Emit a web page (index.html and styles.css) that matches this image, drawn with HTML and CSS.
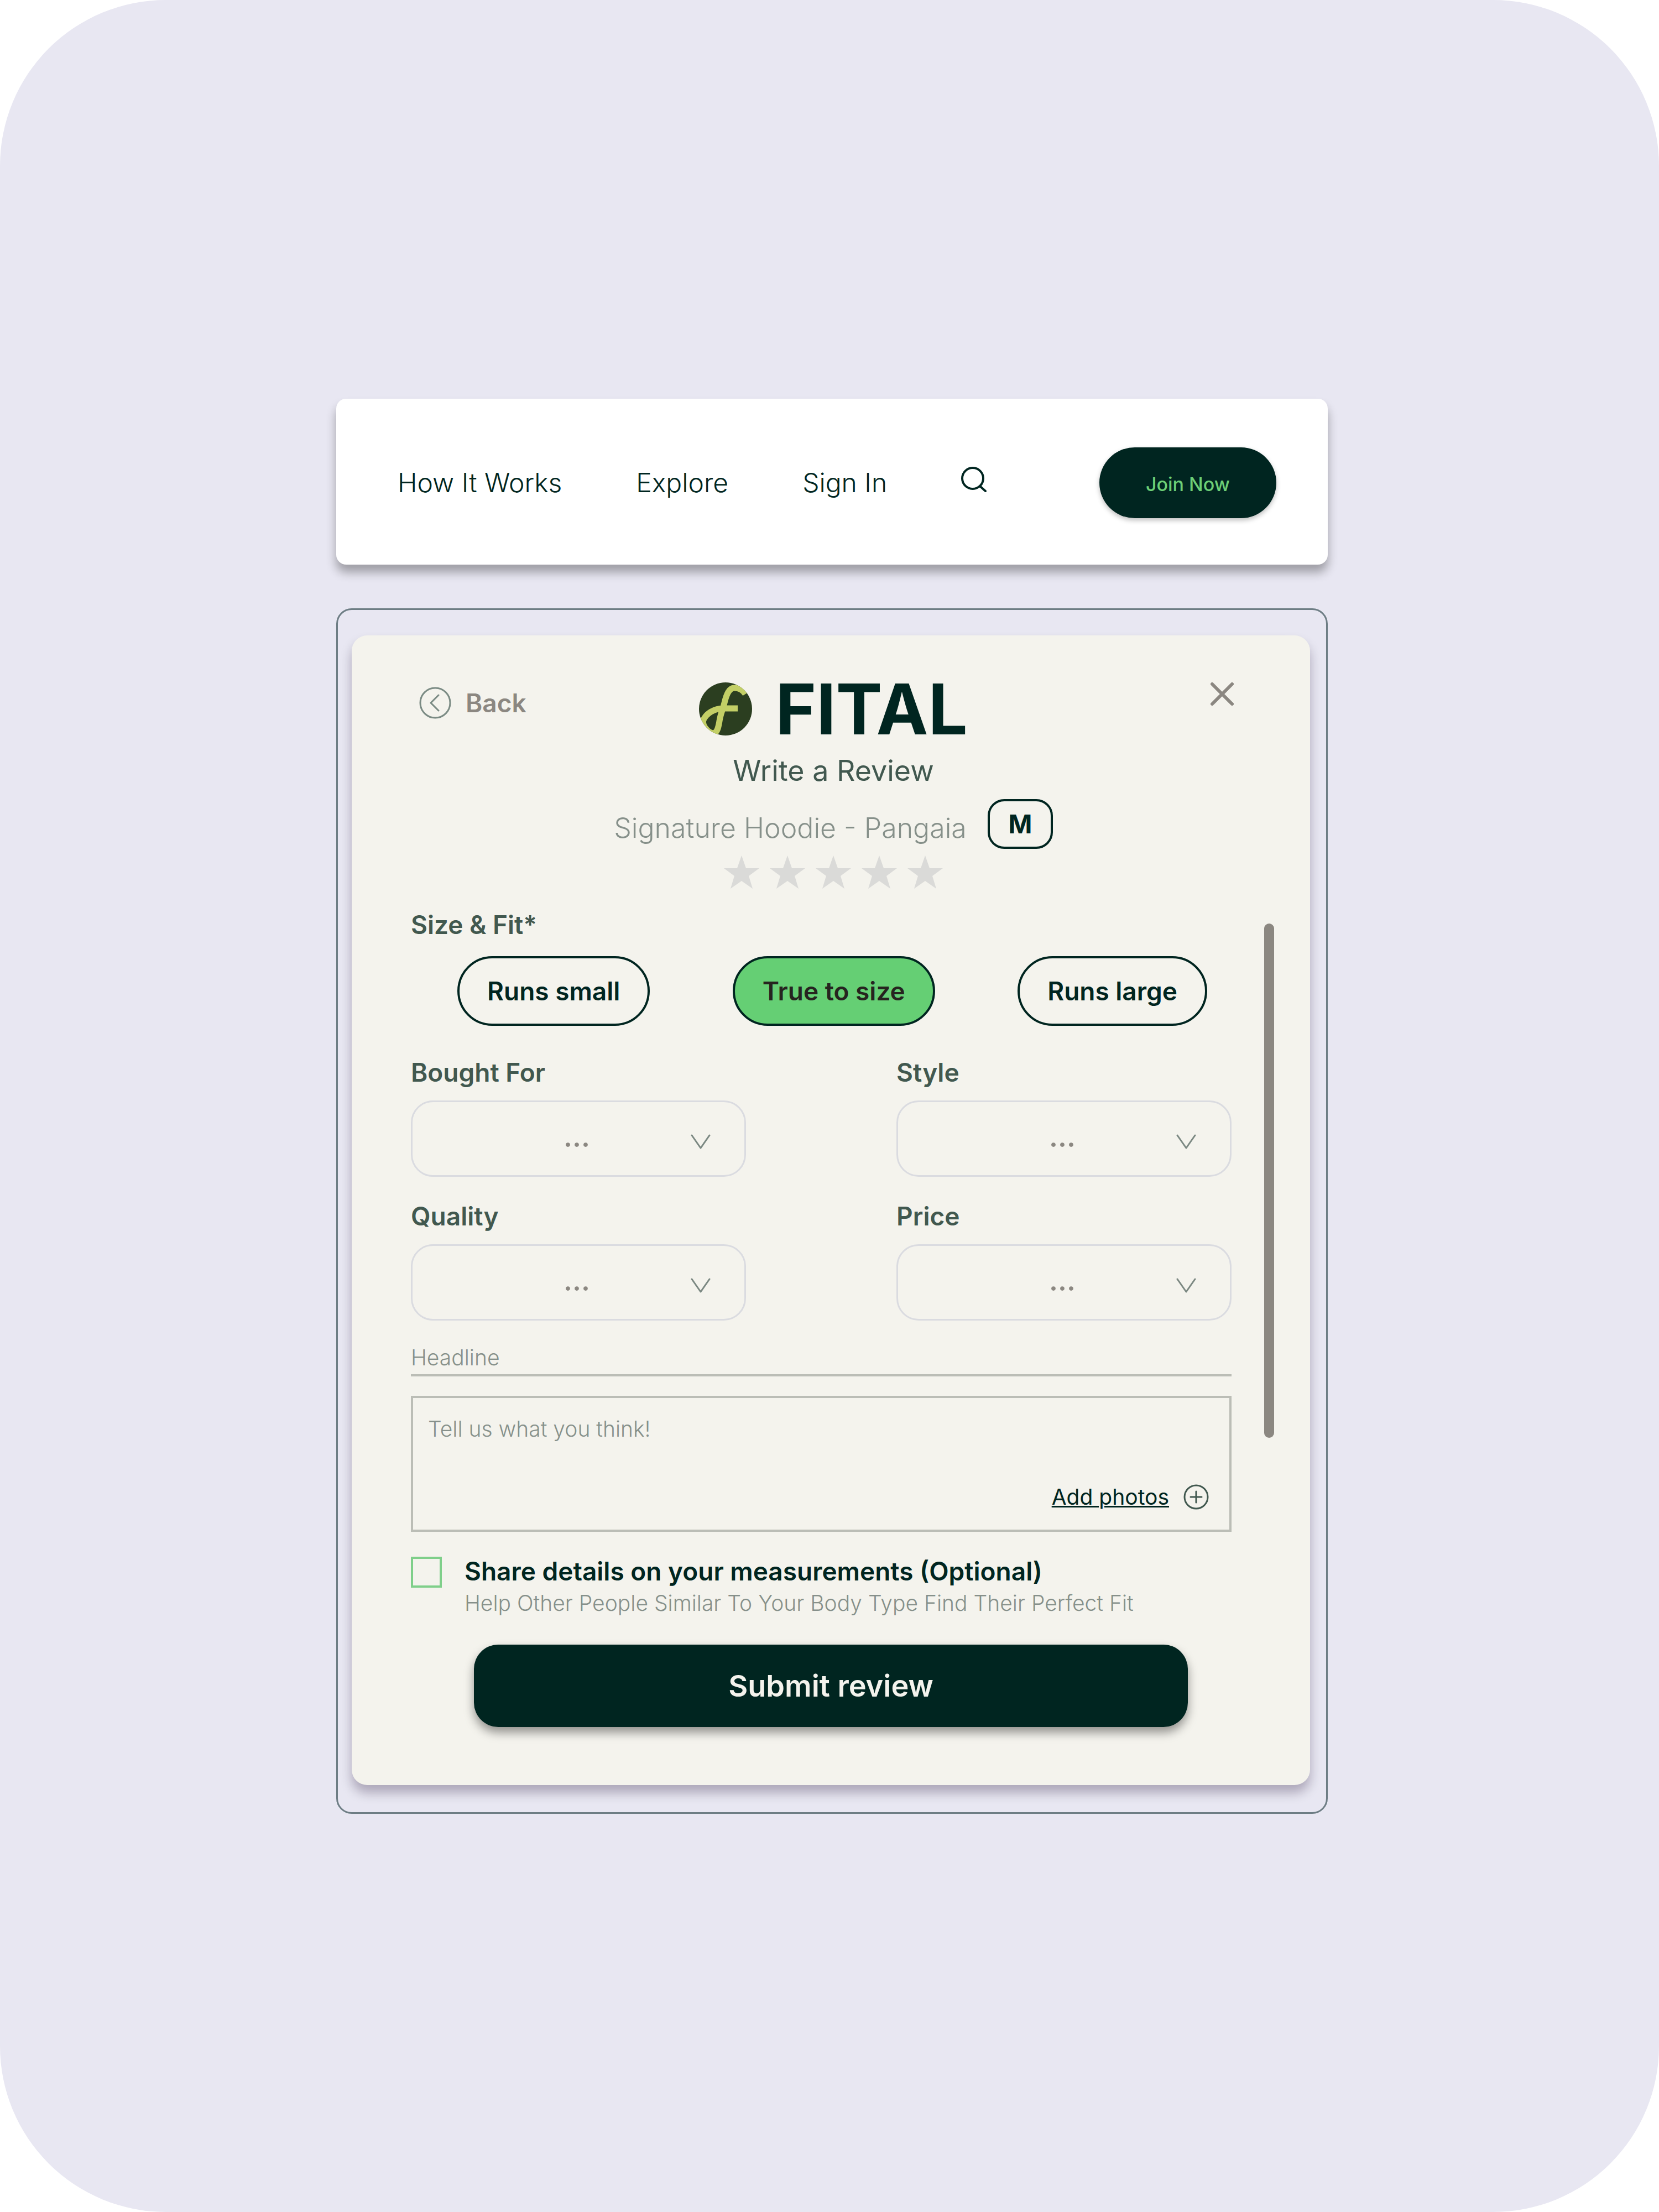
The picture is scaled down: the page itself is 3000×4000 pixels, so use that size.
FILE: index.html
```html
<!DOCTYPE html>
<html lang="en">
<head>
<meta charset="utf-8">
<meta name="viewport" content="width=device-width, initial-scale=1">
<title>Fital – Write a Review</title>
<link rel="stylesheet" href="styles.css">
</head>
<body>
<div class="page">
  <header class="nav">
    <nav class="nav-links" aria-label="Main">
      <a href="#how">How It Works</a>
      <a href="#explore">Explore</a>
      <a href="#signin">Sign In</a>
      <button class="icon-button search" type="button" aria-label="Search">
        <svg width="46" height="46" viewBox="0 0 46 46" fill="none" stroke="currentColor" stroke-width="4" stroke-linecap="round"><circle cx="21" cy="21" r="19"/><path d="M34 35l10 9"/></svg>
      </button>
    </nav>
    <button class="join" type="button">Join Now</button>
  </header>

  <main class="frame">
    <form class="card">
      <div class="card-head">
        <button class="back" type="button">
          <svg width="58" height="58" viewBox="0 0 58 58" fill="none" stroke="#7b8b84" stroke-width="3" stroke-linecap="round" stroke-linejoin="round"><circle cx="29" cy="29" r="27"/><path d="M35 15L21 29l14 14"/></svg>
          <span>Back</span>
        </button>

        <div class="intro">
          <div class="brand">
            <svg width="96" height="96" viewBox="0 0 96 96" fill="none">
              <defs><clipPath id="disc"><circle cx="48" cy="48" r="48"/></clipPath></defs>
              <circle cx="48" cy="48" r="48" fill="#2b3e20"/>
              <path clip-path="url(#disc)" d="M84 21C79 13 72 10 64 10C55 10 50 20 46 37C43 50 39 56 37 70C35 82 33 91 26 92C17 92 5 78 8 68C13 56 28 47 44 47H70" stroke="#c3cf66" stroke-width="11"/>
            </svg>
            <span class="brand-name">FITAL</span>
          </div>
          <h1 class="title">Write a Review</h1>
          <div class="product">
            <span class="product-name">Signature Hoodie - Pangaia</span>
            <span class="size-badge">M</span>
          </div>
          <div class="stars">
            <button class="icon-button" type="button" aria-label="1 star"><svg width="64" height="60" viewBox="0 0 64 60"><path d="M32 0l8 23h24L45 37l7 23-20-14-20 14 7-23L0 23h24z" fill="#dadad8"/></svg></button>
            <button class="icon-button" type="button" aria-label="2 stars"><svg width="64" height="60" viewBox="0 0 64 60"><path d="M32 0l8 23h24L45 37l7 23-20-14-20 14 7-23L0 23h24z" fill="#dadad8"/></svg></button>
            <button class="icon-button" type="button" aria-label="3 stars"><svg width="64" height="60" viewBox="0 0 64 60"><path d="M32 0l8 23h24L45 37l7 23-20-14-20 14 7-23L0 23h24z" fill="#dadad8"/></svg></button>
            <button class="icon-button" type="button" aria-label="4 stars"><svg width="64" height="60" viewBox="0 0 64 60"><path d="M32 0l8 23h24L45 37l7 23-20-14-20 14 7-23L0 23h24z" fill="#dadad8"/></svg></button>
            <button class="icon-button" type="button" aria-label="5 stars"><svg width="64" height="60" viewBox="0 0 64 60"><path d="M32 0l8 23h24L45 37l7 23-20-14-20 14 7-23L0 23h24z" fill="#dadad8"/></svg></button>
          </div>
        </div>

        <button class="icon-button close" type="button" aria-label="Close">
          <svg width="42" height="42" viewBox="0 0 42 42" fill="none" stroke="#8b8781" stroke-width="6" stroke-linecap="round"><path d="M3 3l36 36M39 3L3 39"/></svg>
        </button>
      </div>

      <div class="scroll-area">
        <div class="fields">
          <fieldset class="fit">
            <legend class="label">Size &amp; Fit*</legend>
            <div class="pills">
              <label class="pill"><input type="radio" name="fit" value="small"><span>Runs small</span></label>
              <label class="pill"><input type="radio" name="fit" value="true" checked><span>True to size</span></label>
              <label class="pill"><input type="radio" name="fit" value="large"><span>Runs large</span></label>
            </div>
          </fieldset>

          <div class="selects">
            <div class="field">
              <label class="label" for="bought">Bought For</label>
              <div class="select"><select id="bought"><option>...</option></select><svg width="36" height="28" viewBox="0 0 36 28" fill="none" stroke="#7b8882" stroke-width="3" stroke-linecap="round" stroke-linejoin="round"><path d="M2 2l16 23L34 2"/></svg></div>
            </div>
            <div class="field">
              <label class="label" for="style">Style</label>
              <div class="select"><select id="style"><option>...</option></select><svg width="36" height="28" viewBox="0 0 36 28" fill="none" stroke="#7b8882" stroke-width="3" stroke-linecap="round" stroke-linejoin="round"><path d="M2 2l16 23L34 2"/></svg></div>
            </div>
            <div class="field">
              <label class="label" for="quality">Quality</label>
              <div class="select"><select id="quality"><option>...</option></select><svg width="36" height="28" viewBox="0 0 36 28" fill="none" stroke="#7b8882" stroke-width="3" stroke-linecap="round" stroke-linejoin="round"><path d="M2 2l16 23L34 2"/></svg></div>
            </div>
            <div class="field">
              <label class="label" for="price">Price</label>
              <div class="select"><select id="price"><option>...</option></select><svg width="36" height="28" viewBox="0 0 36 28" fill="none" stroke="#7b8882" stroke-width="3" stroke-linecap="round" stroke-linejoin="round"><path d="M2 2l16 23L34 2"/></svg></div>
            </div>
          </div>

          <input class="headline" type="text" placeholder="Headline" aria-label="Headline">

          <div class="comment">
            <textarea placeholder="Tell us what you think!" aria-label="Review"></textarea>
            <button class="add-photos" type="button">
              <span>Add photos</span>
              <svg width="46" height="46" viewBox="0 0 46 46" fill="none" stroke="#41584f" stroke-width="3" stroke-linecap="round"><circle cx="23" cy="23" r="21"/><path d="M23 13v20M13 23h20"/></svg>
            </button>
          </div>
        </div>
        <div class="scrollbar"></div>
      </div>

      <div class="share">
        <input type="checkbox" id="share">
        <div>
          <label class="share-label" for="share">Share details on your measurements (Optional)</label>
          <p class="share-hint">Help Other People Similar To Your Body Type Find Their Perfect Fit</p>
        </div>
      </div>

      <button class="submit" type="submit">Submit review</button>
    </form>
  </main>
</div>
</body>
</html>
```
FILE: styles.css
```css
:root {
  --ink: #002520;
  --green-gray: #41584f;
  --muted: #86908a;
  --warm-gray: #8b8781;
  --cream: #f4f3ed;
  --line: #bbbdb6;
}

* {
  box-sizing: border-box;
}

body {
  margin: 0;
  background: #fff;
  color: var(--ink);
  font-family: Inter, "Liberation Sans", sans-serif;
}

button,
input,
select,
textarea {
  margin: 0;
  padding: 0;
  border: 0;
  background: none;
  color: inherit;
  font: inherit;
  appearance: none;
}

svg {
  display: block;
  flex: none;
}

.page {
  display: flex;
  flex-direction: column;
  justify-content: center;
  gap: 79px;
  min-height: 100vh;
  padding: 40px calc(20% - 1px) 40px calc(20% + 8px);
  border-radius: 300px;
  background: #e8e7f2;
}

/* Top navigation */
.nav {
  display: flex;
  align-items: center;
  justify-content: space-between;
  min-height: 300px;
  padding: 4px 93px 0 111px;
  border-radius: 18px;
  background: #fff;
  box-shadow: 0 14px 18px rgba(0, 0, 0, 0.32);
}

.nav-links {
  display: flex;
  align-items: center;
  gap: 134px;
}

.nav-links a {
  color: inherit;
  font-size: 48px;
  font-weight: 300;
  line-height: 60px;
  text-decoration: none;
  white-space: nowrap;
}

.search {
  margin-bottom: 12px;
}

.join {
  height: 128px;
  padding: 6px 84px 0;
  border-radius: 64px;
  background: var(--ink);
  box-shadow: 0 4px 8px rgba(0, 0, 0, 0.25);
  color: #6ccf76;
  font-size: 34px;
  font-weight: 500;
}

/* Review dialog */
.frame {
  padding: 46px 29px 49px 25px;
  border: 3px solid #6d7d84;
  border-radius: 28px;
}

.card {
  padding: 85px 0 105px;
  border-radius: 28px;
  background: var(--cream);
  box-shadow: 0 14px 20px rgba(20, 0, 40, 0.28);
}

.card-head {
  display: grid;
  grid-template-columns: 1fr auto 1fr;
  align-items: start;
  padding: 0 113px 0 122px;
}

.back {
  display: flex;
  align-items: center;
  justify-self: start;
  gap: 26px;
  padding-top: 8px;
  color: var(--warm-gray);
  font-size: 46px;
  font-weight: 600;
}

.close {
  justify-self: end;
  padding: 0 25px;
}

.intro {
  display: flex;
  flex-direction: column;
  align-items: center;
}

.brand {
  display: flex;
  align-items: center;
  gap: 42px;
}

.brand-name {
  font-size: 126px;
  font-weight: 700;
  line-height: 96px;
}

.title {
  margin: 32px 0 0;
  color: var(--green-gray);
  font-size: 52px;
  font-weight: 400;
  line-height: 64px;
}

.product {
  display: flex;
  align-items: end;
  gap: 38px;
  margin-top: 19px;
}

.product-name {
  color: var(--muted);
  font-size: 50px;
  font-weight: 300;
  line-height: 76px;
}

.size-badge {
  width: 118px;
  border: 4px solid var(--ink);
  border-radius: 30px;
  font-size: 46px;
  font-weight: 700;
  line-height: 82px;
  text-align: center;
}

.stars {
  display: flex;
  gap: 19px;
  margin-top: 12px;
}

.scroll-area {
  display: grid;
  grid-template-columns: 1fr 18px;
  gap: 59px;
  margin-top: 35px;
  padding: 0 65px 0 107px;
}

.scrollbar {
  margin: 28px 0 170px;
  border-radius: 9px;
  background: var(--warm-gray);
}

.label {
  display: block;
  padding: 0;
  color: var(--green-gray);
  font-size: 46px;
  font-weight: 600;
  line-height: 60px;
}

.fit {
  margin: 0;
  padding: 0;
  border: 0;
}

.pills {
  display: flex;
  justify-content: space-between;
  padding: 27px 44px 0 84px;
}

.pill {
  display: flex;
  cursor: pointer;
}

.pill input {
  width: 0;
  height: 0;
}

.pill span {
  padding: 0 50px;
  border: 4px solid var(--ink);
  border-radius: 63px;
  font-size: 46px;
  font-weight: 600;
  line-height: 118px;
}

.pill input:checked + span {
  background: #65cf74;
  color: #26241f;
}

.selects {
  display: grid;
  grid-template-columns: 1fr 1fr;
  gap: 41px 272px;
  margin-top: 54px;
}

.select {
  display: grid;
  align-items: center;
  margin-top: 21px;
}

.select select {
  grid-area: 1 / 1;
  width: 100%;
  height: 138px;
  padding: 0 6px 6px 0;
  border: 3px solid #dadbe0;
  border-radius: 40px;
  color: var(--warm-gray);
  font-size: 50px;
  font-weight: 600;
  text-align: center;
  text-align-last: center;
}

.select svg {
  grid-area: 1 / 1;
  justify-self: end;
  margin: 12px 64px 0 0;
  pointer-events: none;
}

.headline {
  display: block;
  width: 100%;
  height: 64px;
  margin-top: 37px;
  border-bottom: 4px solid var(--line);
  font-size: 39px;
  font-weight: 300;
}

::placeholder {
  color: var(--muted);
  opacity: 1;
}

.comment {
  display: flex;
  flex-direction: column;
  margin-top: 35px;
  padding: 26px 37px 29px 27px;
  border: 4px solid var(--line);
}

.comment textarea {
  height: 123px;
  font-size: 39px;
  font-weight: 300;
  line-height: 60px;
  resize: none;
}

.add-photos {
  display: flex;
  align-items: center;
  align-self: end;
  gap: 26px;
  height: 60px;
  font-size: 39px;
  font-weight: 400;
}

.add-photos span {
  text-decoration: underline;
  text-decoration-thickness: 3px;
}

.share {
  display: flex;
  align-items: start;
  gap: 41px;
  margin-top: 42px;
  padding: 0 107px;
}

.share input {
  flex: none;
  width: 56px;
  height: 56px;
  margin-top: 3px;
  border: 4px solid #7fcf8a;
}

.share input:checked {
  background: #65cf74;
}

.share-label {
  display: block;
  font-size: 46px;
  font-weight: 600;
  line-height: 58px;
}

.share-hint {
  margin: 0;
  color: var(--muted);
  font-size: 39px;
  font-weight: 300;
  line-height: 58px;
}

.submit {
  display: block;
  width: calc(100% - 442px);
  height: 149px;
  margin: 46px auto 0;
  border-radius: 44px;
  background: var(--ink);
  box-shadow: 0 10px 18px rgba(0, 0, 0, 0.4);
  color: var(--cream);
  font-size: 54px;
  font-weight: 600;
}
```
